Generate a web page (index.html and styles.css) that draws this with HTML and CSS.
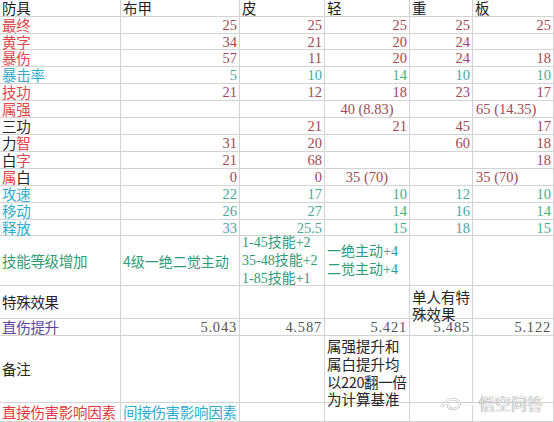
FILE: index.html
```html
<!DOCTYPE html>
<html lang="zh">
<head>
<meta charset="utf-8">
<title>防具对比</title>
<link rel="stylesheet" href="styles.css">
</head>
<body>
<div class="sheet">
  <div class="c lab hd">防具</div><div class="c hd">布甲</div><div class="c hd">皮</div><div class="c hd">轻</div><div class="c hd">重</div><div class="c hd">板</div>

  <div class="c lab red">最终</div><div class="c n r">25</div><div class="c n r">25</div><div class="c n r">25</div><div class="c n r">25</div><div class="c n r">25</div>
  <div class="c lab red">黄字</div><div class="c n r">34</div><div class="c n r">21</div><div class="c n r">20</div><div class="c n r">24</div><div class="c"></div>
  <div class="c lab red">暴伤</div><div class="c n r">57</div><div class="c n r">11</div><div class="c n r">20</div><div class="c n r">24</div><div class="c n r">18</div>
  <div class="c lab cyan">暴击率</div><div class="c n t">5</div><div class="c n t">10</div><div class="c n t">14</div><div class="c n t">10</div><div class="c n t">10</div>
  <div class="c lab red">技功</div><div class="c n r">21</div><div class="c n r">12</div><div class="c n r">18</div><div class="c n r">23</div><div class="c n r">17</div>
  <div class="c lab red">属强</div><div class="c"></div><div class="c"></div><div class="c n r mid">40 (8.83)</div><div class="c"></div><div class="c n r left">65 (14.35)</div>
  <div class="c lab dark">三功</div><div class="c"></div><div class="c n r">21</div><div class="c n r">21</div><div class="c n r">45</div><div class="c n r">17</div>
  <div class="c lab"><span class="dark">力</span><span class="red">智</span></div><div class="c n r">31</div><div class="c n r">20</div><div class="c"></div><div class="c n r">60</div><div class="c n r">18</div>
  <div class="c lab"><span class="dark">白</span><span class="red">字</span></div><div class="c n r">21</div><div class="c n r">68</div><div class="c"></div><div class="c"></div><div class="c n r">18</div>
  <div class="c lab"><span class="red">属</span><span class="dark">白</span></div><div class="c n r">0</div><div class="c n r">0</div><div class="c n r mid">35 (70)</div><div class="c"></div><div class="c n r left">35 (70)</div>
  <div class="c lab cyan">攻速</div><div class="c n t">22</div><div class="c n t">17</div><div class="c n t">10</div><div class="c n t">12</div><div class="c n t">10</div>
  <div class="c lab cyan">移动</div><div class="c n t">26</div><div class="c n t">27</div><div class="c n t">14</div><div class="c n t">16</div><div class="c n t">14</div>
  <div class="c lab cyan">释放</div><div class="c n t">33</div><div class="c n t">25.5</div><div class="c n t">15</div><div class="c n t">18</div><div class="c n t">15</div>

  <div class="c lab green">技能等级增加</div>
  <div class="c txt green">4级一绝二觉主动</div>
  <div class="c txt green multi"><span>1-45技能+2</span><span>35-48技能+2</span><span>1-85技能+1</span></div>
  <div class="c txt green multi"><span>一绝主动+4</span><span>二觉主动+4</span></div>
  <div class="c"></div><div class="c"></div>

  <div class="c lab dark">特殊效果</div><div class="c"></div><div class="c"></div><div class="c"></div>
  <div class="c txt dark top wrap">单人有特<br>殊效果</div><div class="c"></div>

  <div class="c lab purple">直伤提升</div><div class="c n g">5.043</div><div class="c n g">4.587</div><div class="c n g">5.421</div><div class="c n g">5.485</div><div class="c n g">5.122</div>

  <div class="c lab dark">备注</div><div class="c"></div><div class="c"></div>
  <div class="c txt dark top wrap note">属强提升和<br>属白提升均<br><span class="narrow">以220翻一倍</span><br>为计算基准</div>
  <div class="c"></div><div class="c"></div>

  <div class="c lab red2">直接伤害影响因素</div><div class="c lab cyan">间接伤害影响因素</div><div class="c"></div><div class="c"></div><div class="c"></div><div class="c"></div>
</div>
<div class="mark">
  <svg width="22" height="16" viewBox="0 0 22 16"><path d="M2 11 C5 3 15 1 19 6 C21 9 18 13 13 13 C9 13 7 10 9 8" fill="none" stroke="rgba(150,150,150,0.6)" stroke-width="2.4"/><path d="M2 11 C5 3 15 1 19 6 C21 9 18 13 13 13 C9 13 7 10 9 8" fill="none" stroke="rgba(255,255,255,0.95)" stroke-width="1.2"/></svg>
  <span class="line"></span>
  <span class="mtxt">悟空问答</span>
</div>
</body>
</html>
```
FILE: styles.css
```css
html, body {
  margin: 0;
  padding: 0;
  background: #ffffff;
  overflow: hidden;
}
body {
  width: 554px;
  height: 422px;
  position: relative;
  font-family: "Noto Sans CJK SC", "Noto Sans", sans-serif;
  font-size: 14px;
  color: #222;
}
.sheet {
  display: grid;
  grid-template-columns: 121px 119px 85px 85px 63px 81px;
  grid-template-rows: 17px 17px 16px 17px 17px 17px 17px 17px 17px 17px 17px 17px 17px 16px 50px 33px 17px 67px 19px;
}
.c {
  box-sizing: border-box;
  border-right: 1px solid #d3d3d3;
  border-bottom: 1px solid #d3d3d3;
  display: flex;
  align-items: center;
  overflow: visible;
  white-space: nowrap;
  line-height: 16px;
  padding: 0 2px;
}
.hd {
  color: #1e1e1e;
  font-size: 14.5px;
}
.lab {
  font-size: 14.5px;
  letter-spacing: -0.3px;
}
.n {
  justify-content: flex-end;
  font-family: "Liberation Serif", "Noto Sans CJK SC", serif;
  font-size: 14.5px;
}
.n.mid { justify-content: center; }
.n.left { justify-content: flex-start; padding-left: 3px; }
.r { color: #a04a52; }
.t { color: #4aa898; }
.g { color: #555555; letter-spacing: 0.8px; }
.red { color: #e0474c; }
.red2 { color: #e23a40; }
.cyan { color: #2faccc; }
.dark { color: #252525; }
.green { color: #2f9b78; }
.purple { color: #5e46a0; }
.txt { font-size: 14px; }
.multi {
  flex-direction: column;
  align-items: flex-start;
  justify-content: center;
  line-height: 18px;
  font-family: "Liberation Serif", "Noto Sans CJK SC", serif;
  font-size: 14px;
}
.top { align-items: flex-start; }
.wrap {
  display: block;
  white-space: nowrap;
  line-height: 17px;
  padding-top: 2px;
  font-size: 14.5px;
}
.note { padding-top: 1px; line-height: 17.8px; }
.narrow { letter-spacing: -0.4px; }
.mark {
  position: absolute;
  left: 440px;
  top: 395px;
  display: flex;
  align-items: center;
  gap: 2px;
}
.line {
  width: 10px;
  height: 2px;
  background: rgba(255,255,255,0.9);
  box-shadow: 0 0 1px rgba(120,120,120,0.7);
}
.mtxt {
  font-size: 16px;
  line-height: 17px;
  margin-left: 3px;
  color: rgba(255,255,255,0.9);
  text-shadow: 0 0 1px rgba(110,110,110,0.8), 0 0 1px rgba(110,110,110,0.8);
}
```
